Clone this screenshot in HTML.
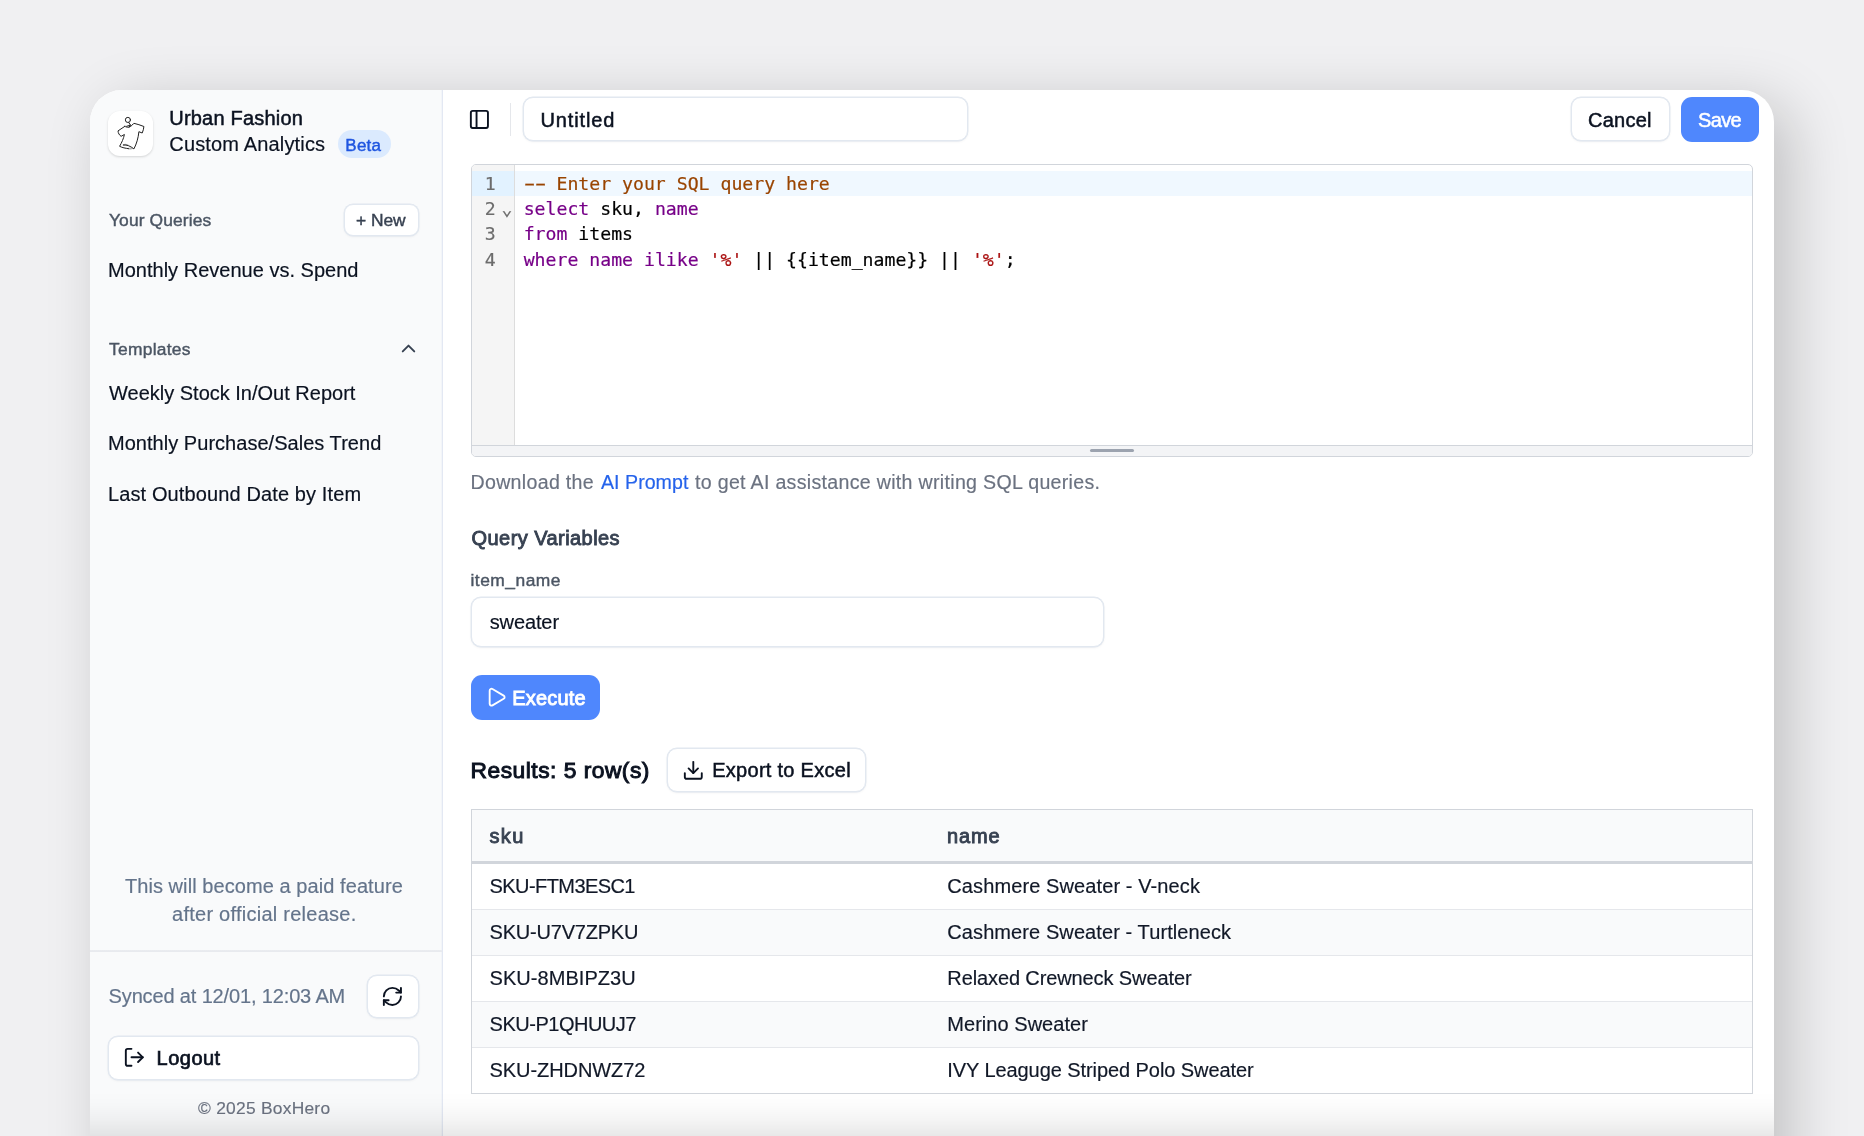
<!DOCTYPE html>
<html lang="en">
<head>
<meta charset="utf-8">
<title>Custom Analytics - Urban Fashion</title>
<style>
*{box-sizing:border-box}
html,body{margin:0;padding:0}
body{width:1864px;height:1136px;overflow:hidden;position:relative;background:#f0f0f2;font-family:"Liberation Sans", sans-serif;-webkit-font-smoothing:antialiased}
.abs{position:absolute}
.card{position:absolute;left:90px;top:90px;width:1684px;height:1200px;background:#fff;border-radius:32px 32px 0 0;box-shadow:16px 14px 60px rgba(0,0,0,.2)}
.side{position:absolute;left:0;top:0;width:353px;height:1200px;background:#f9fafb;border-right:1px solid #e3e8f3;box-shadow:inset -1px 0 0 #f2f5f9;border-radius:32px 0 0 0}
.t{position:absolute;white-space:pre;line-height:1;font-family:"Liberation Sans", sans-serif}
.ic{position:absolute;display:block;overflow:visible}
.codetxt{position:absolute;left:0;top:0;width:1280px;height:280px;will-change:transform}
.txt{position:absolute;left:0;top:0;width:1864px;height:1136px;will-change:transform}
.btn{position:absolute;background:#fff;border:1px solid #e2e8f0;border-radius:10px;box-shadow:0 0 0 .45px #e2e8f0,0 1px 2.5px rgba(15,23,42,.06)}
.logo{position:absolute;left:108px;top:111px;width:45px;height:45px;border-radius:12px;background:#fff;box-shadow:0 1px 3px rgba(0,0,0,.10),0 1px 2px rgba(0,0,0,.06)}
.badge{position:absolute;left:337.5px;top:130.3px;width:53px;height:28px;border-radius:14px;background:#dbeafe}
.hr{position:absolute;left:90px;top:950px;width:352px;height:2px;background:linear-gradient(#eaecf0,#e7e9ee)}
.vdiv{position:absolute;left:510px;top:103px;width:1.4px;height:32.5px;background:#e5e7eb}
.primary{position:absolute;background:#4f87fd;border-radius:11px}
.editor{position:absolute;left:471px;top:164.4px;width:1282px;height:292.6px;border:1.3px solid #d1d5db;border-radius:5px;overflow:hidden;background:#fff}
.gutter{position:absolute;left:0;top:0;width:43px;height:280px;background:#f5f5f5;border-right:1.3px solid #dddddd}
.gact{position:absolute;left:0;top:6px;width:42px;height:25px;background:#e2f2ff}
.lact{position:absolute;left:43px;top:6px;right:0;height:25px;background:#f0f8ff}
.cl{position:absolute;left:51.7px;white-space:pre;font-family:"DejaVu Sans Mono", "Liberation Mono", monospace;font-size:18.16px;line-height:25.3px;height:25.3px;color:#000}
.gn{position:absolute;left:0;width:23.6px;text-align:right;font-family:"DejaVu Sans Mono", "Liberation Mono", monospace;font-size:18.16px;line-height:25.3px;height:25.3px;color:#6c6c6c}
.fold{position:absolute;left:29.6px;top:32.8px;font-family:"DejaVu Sans Mono", "Liberation Mono", monospace;font-size:18.16px;color:#6c6c6c}
.dash{display:inline-block;transform:translateY(-1px) scaleX(1.8)}
.cl,.gn,.fold{-webkit-text-stroke:.2px currentColor}
.resize{position:absolute;left:0;right:0;bottom:0;height:11px;background:#f3f4f6;border-top:1.3px solid #d1d5db}
.grip{position:absolute;left:617.6px;top:3.2px;width:44.5px;height:2.8px;border-radius:2px;background:#9ca3af}
.input{position:absolute;background:#fff;border:1px solid #e2e8f0;border-radius:10px;box-shadow:0 0 0 .45px #e2e8f0,0 1px 2.5px rgba(15,23,42,.06)}
.table{position:absolute;left:471px;top:809px;width:1282px;height:285px;border:1px solid #d1d5db;background:#fff;overflow:hidden}
.th{position:absolute;left:0;top:0;right:0;height:54px;background:#f9fafb;border-bottom:3px solid #d1d5db}
.tr{position:absolute;left:0;right:0;height:46px;border-bottom:1px solid #e5e7eb}
.fade{position:absolute;left:90px;top:1092px;width:1684px;height:44px;background:linear-gradient(to bottom,rgba(0,0,0,0),rgba(0,0,0,.012) 30%,rgba(0,0,0,.04) 62%,rgba(0,0,0,.09))}
</style>
</head>
<body>
<div class="card">
  <aside class="side"></aside>
</div>
<div class="logo"></div>
<svg class="ic" style="left:108px;top:111px" width="45" height="45" viewBox="0 0 45 45" fill="none" stroke="#222" stroke-width="1.0" stroke-linecap="round" stroke-linejoin="round">
<circle cx="19.9" cy="8.9" r="2.55"/>
<path d="M20.7 11.4 22.5 14.1"/>
<path d="M16.9 15.3C18.8 16.9 22.2 16.9 24.7 13.5"/>
<path d="M18.6 15.3 22.5 14.1 21 16.2" stroke-width="1"/>
<path d="M16.9 15.3 10 19.9C10.1 22 11.400 24.300 13.100 25.300L16.400 23.500C15.600 27.600 13.700 31.600 11.600 35.300 14.400 36.700 17.400 37.300 20.400 37.600"/>
<path d="M15.400 33.900C19 33.500 22.600 35.300 25.900 37.900 28.500 33 30.300 27 30.900 20.700L34.200 22C35.100 19.900 35.700 17.700 35.900 15.500 32.600 14.200 29.300 13.100 25.900 12.300L24.700 13.500"/>
<path d="M20.400 37.600C21.700 37.700 22.800 37.600 23.800 37.400" stroke-width="1.6" opacity=".35"/>
<path d="M15.400 33.900C16.600 33.500 18.200 33.600 19.600 34" stroke-width="1.6" opacity=".3"/>
</svg>
<div class="badge"></div>
<div class="btn" style="left:344px;top:203.7px;width:75px;height:32px;border-radius:9px"></div>
<div class="hr"></div>
<div class="btn" style="left:367px;top:974.6px;width:52px;height:43px"></div>
<div class="btn" style="left:108.4px;top:1035.8px;width:310.4px;height:44.4px"></div>
<div class="vdiv"></div>
<div class="input" style="left:523px;top:97.3px;width:445.4px;height:44px"></div>
<div class="btn" style="left:1571px;top:97.2px;width:98.6px;height:43.6px"></div>
<div class="primary" style="left:1681px;top:96.9px;width:77.6px;height:44.8px"></div>
<div class="editor">
  <div class="gutter"></div>
  <div class="gact"></div>
  <div class="lact"></div>
  <div class="codetxt">
  <div class="gn" style="top:5.50px">1</div><div class="gn" style="top:30.80px">2</div><div class="gn" style="top:56.30px">3</div><div class="gn" style="top:82.40px">4</div>
  <div class="fold">&#8964;</div>
  <div class="cl" style="top:5.50px"><span style="color:#994400"><span class="dash">-</span><span class="dash">-</span> Enter your SQL query here</span></div><div class="cl" style="top:30.80px"><span style="color:#770088">select</span> sku, <span style="color:#770088">name</span></div><div class="cl" style="top:56.30px"><span style="color:#770088">from</span> items</div><div class="cl" style="top:82.40px"><span style="color:#770088">where</span> <span style="color:#770088">name</span> <span style="color:#770088">ilike</span> <span style="color:#aa1111">&#x27;%&#x27;</span> || {{item_name}} || <span style="color:#aa1111">&#x27;%&#x27;</span>;</div>
  </div>
  <div class="resize"><div class="grip"></div></div>
</div>
<div class="input" style="left:471px;top:597.4px;width:632.6px;height:49.6px"></div>
<div class="primary" style="left:471px;top:675px;width:129px;height:44.7px"></div>
<div class="btn" style="left:666.5px;top:748px;width:199.5px;height:44px"></div>
<div class="table">
  <div class="th"></div>
  <div class="tr" style="top:54px;background:#ffffff"></div><div class="tr" style="top:100px;background:#f9fafb"></div><div class="tr" style="top:146px;background:#ffffff"></div><div class="tr" style="top:192px;background:#f9fafb"></div><div class="tr" style="top:238px;background:#ffffff"></div>
</div>
<svg class="ic" style="left:467.90px;top:108.00px" width="22.8" height="22.8" viewBox="0 0 24 24" fill="none" stroke="#0b1220" stroke-width="2" stroke-linecap="round" stroke-linejoin="round"><rect width="18" height="18" x="3" y="3" rx="2"/><path d="M9 3v18"/></svg><svg class="ic" style="left:396.80px;top:337.00px" width="23" height="23" viewBox="0 0 24 24" fill="none" stroke="#374151" stroke-width="2" stroke-linecap="round" stroke-linejoin="round"><path d="m18 15-6-6-6 6"/></svg><svg class="ic" style="left:485.20px;top:685.70px" width="22.4" height="22.4" viewBox="0 0 24 24" fill="none" stroke="#ffffff" stroke-width="2" stroke-linecap="round" stroke-linejoin="round"><path d="M5 5a2 2 0 0 1 3.008-1.728l11.997 6.998a2 2 0 0 1 .003 3.458l-12 7A2 2 0 0 1 5 19z"/></svg><svg class="ic" style="left:681.80px;top:758.50px" width="22.6" height="22.6" viewBox="0 0 24 24" fill="none" stroke="#0b1220" stroke-width="2" stroke-linecap="round" stroke-linejoin="round"><path d="M21 15v4a2 2 0 0 1-2 2H5a2 2 0 0 1-2-2v-4"/><path d="m7 10 5 5 5-5"/><path d="M12 15V3"/></svg><svg class="ic" style="left:381.40px;top:985.10px" width="22.8" height="22.8" viewBox="0 0 24 24" fill="none" stroke="#0b1220" stroke-width="2" stroke-linecap="round" stroke-linejoin="round"><path d="M3 12a9 9 0 0 1 9-9 9.75 9.75 0 0 1 6.74 2.74L21 8"/><path d="M21 3v5h-5"/><path d="M21 12a9 9 0 0 1-9 9 9.75 9.75 0 0 1-6.74-2.74L3 16"/><path d="M8 16H3v5"/></svg><svg class="ic" style="left:123.00px;top:1046.40px" width="22.6" height="22.6" viewBox="0 0 24 24" fill="none" stroke="#0b1220" stroke-width="2" stroke-linecap="round" stroke-linejoin="round"><path d="M9 21H5a2 2 0 0 1-2-2V5a2 2 0 0 1 2-2h4"/><path d="m16 17 5-5-5-5"/><path d="M21 12H9"/></svg>
<div class="txt"><span class="t" style="left:169.30px;top:107.97px;font-size:20px;font-weight:400;color:#0b1220;letter-spacing:0.195px;-webkit-text-stroke:0.5px currentColor;">Urban Fashion</span><span class="t" style="left:169.30px;top:134.37px;font-size:20px;font-weight:400;color:#0b1220;letter-spacing:0.161px;-webkit-text-stroke:0.18px currentColor;">Custom Analytics</span><span class="t" style="left:345.30px;top:136.81px;font-size:17px;font-weight:400;color:#1f55e0;letter-spacing:0.261px;-webkit-text-stroke:0.43px currentColor;">Beta</span><span class="t" style="left:109.00px;top:211.77px;font-size:17.4px;font-weight:400;color:#4b5563;letter-spacing:0.121px;-webkit-text-stroke:0.43px currentColor;">Your Queries</span><span class="t" style="left:356.00px;top:211.77px;font-size:17.4px;font-weight:400;color:#374151;letter-spacing:-0.055px;-webkit-text-stroke:0.43px currentColor;">+ New</span><span class="t" style="left:108.00px;top:260.27px;font-size:20px;font-weight:400;color:#0b1220;letter-spacing:0.012px;-webkit-text-stroke:0.18px currentColor;">Monthly Revenue vs. Spend</span><span class="t" style="left:109.00px;top:340.77px;font-size:17.4px;font-weight:400;color:#4b5563;letter-spacing:0.280px;-webkit-text-stroke:0.43px currentColor;">Templates</span><span class="t" style="left:109.00px;top:382.77px;font-size:20px;font-weight:400;color:#0b1220;letter-spacing:-0.002px;-webkit-text-stroke:0.18px currentColor;">Weekly Stock In/Out Report</span><span class="t" style="left:108.00px;top:433.27px;font-size:20px;font-weight:400;color:#0b1220;letter-spacing:0.033px;-webkit-text-stroke:0.18px currentColor;">Monthly Purchase/Sales Trend</span><span class="t" style="left:108.00px;top:483.57px;font-size:20px;font-weight:400;color:#0b1220;letter-spacing:0.117px;-webkit-text-stroke:0.18px currentColor;">Last Outbound Date by Item</span><span class="t" style="left:124.90px;top:875.97px;font-size:20px;font-weight:400;color:#64748b;letter-spacing:0.074px;-webkit-text-stroke:0.18px currentColor;">This will become a paid feature</span><span class="t" style="left:172.00px;top:903.87px;font-size:20px;font-weight:400;color:#64748b;letter-spacing:0.257px;-webkit-text-stroke:0.18px currentColor;">after official release.</span><span class="t" style="left:108.60px;top:986.27px;font-size:20px;font-weight:400;color:#64748b;letter-spacing:-0.146px;-webkit-text-stroke:0.18px currentColor;">Synced at 12/01, 12:03 AM</span><span class="t" style="left:156.60px;top:1047.77px;font-size:20px;font-weight:400;color:#0b1220;letter-spacing:0.477px;-webkit-text-stroke:0.7px currentColor;">Logout</span><span class="t" style="left:198.00px;top:1099.87px;font-size:17.4px;font-weight:400;color:#6b7280;letter-spacing:0.250px;-webkit-text-stroke:0.16px currentColor;">© 2025 BoxHero</span><span class="t" style="left:540.40px;top:110.07px;font-size:20px;font-weight:400;color:#0b1220;letter-spacing:0.887px;-webkit-text-stroke:0.5px currentColor;">Untitled</span><span class="t" style="left:1588.00px;top:109.97px;font-size:20px;font-weight:400;color:#0b1220;letter-spacing:0.237px;-webkit-text-stroke:0.5px currentColor;">Cancel</span><span class="t" style="left:1698.00px;top:109.97px;font-size:20px;font-weight:400;color:#ffffff;letter-spacing:-0.654px;-webkit-text-stroke:0.5px currentColor;">Save</span><span class="t" style="left:471.50px;top:528.47px;font-size:20px;font-weight:400;color:#374151;letter-spacing:0.442px;-webkit-text-stroke:0.88px currentColor;">Query Variables</span><span class="t" style="left:470.50px;top:571.67px;font-size:17.4px;font-weight:400;color:#4b5563;letter-spacing:0.493px;-webkit-text-stroke:0.43px currentColor;">item_name</span><span class="t" style="left:489.70px;top:612.27px;font-size:20px;font-weight:400;color:#0b1220;letter-spacing:-0.112px;-webkit-text-stroke:0.18px currentColor;">sweater</span><span class="t" style="left:512.30px;top:687.77px;font-size:20px;font-weight:400;color:#ffffff;letter-spacing:0.193px;-webkit-text-stroke:0.88px currentColor;">Execute</span><span class="t" style="left:470.60px;top:759.40px;font-size:22.8px;font-weight:400;color:#0b1220;letter-spacing:0.486px;-webkit-text-stroke:1.0px currentColor;">Results: 5 row(s)</span><span class="t" style="left:712.20px;top:760.07px;font-size:20px;font-weight:400;color:#0b1220;letter-spacing:0.282px;-webkit-text-stroke:0.5px currentColor;">Export to Excel</span><span class="t" style="left:489.40px;top:825.97px;font-size:20px;font-weight:400;color:#374151;letter-spacing:1.400px;-webkit-text-stroke:0.88px currentColor;">sku</span><span class="t" style="left:947.00px;top:825.97px;font-size:20px;font-weight:400;color:#374151;letter-spacing:0.898px;-webkit-text-stroke:0.88px currentColor;">name</span><span class="t" style="left:489.60px;top:876.17px;font-size:20px;font-weight:400;color:#111827;letter-spacing:-0.584px;-webkit-text-stroke:0.18px currentColor;">SKU-FTM3ESC1</span><span class="t" style="left:947.30px;top:876.17px;font-size:20px;font-weight:400;color:#111827;letter-spacing:0.104px;-webkit-text-stroke:0.18px currentColor;">Cashmere Sweater - V-neck</span><span class="t" style="left:489.60px;top:922.17px;font-size:20px;font-weight:400;color:#111827;letter-spacing:-0.210px;-webkit-text-stroke:0.18px currentColor;">SKU-U7V7ZPKU</span><span class="t" style="left:947.30px;top:922.17px;font-size:20px;font-weight:400;color:#111827;letter-spacing:0.090px;-webkit-text-stroke:0.18px currentColor;">Cashmere Sweater - Turtleneck</span><span class="t" style="left:489.60px;top:968.17px;font-size:20px;font-weight:400;color:#111827;letter-spacing:0.042px;-webkit-text-stroke:0.18px currentColor;">SKU-8MBIPZ3U</span><span class="t" style="left:947.30px;top:968.17px;font-size:20px;font-weight:400;color:#111827;letter-spacing:-0.109px;-webkit-text-stroke:0.18px currentColor;">Relaxed Crewneck Sweater</span><span class="t" style="left:489.60px;top:1014.17px;font-size:20px;font-weight:400;color:#111827;letter-spacing:-0.494px;-webkit-text-stroke:0.18px currentColor;">SKU-P1QHUUJ7</span><span class="t" style="left:947.30px;top:1014.17px;font-size:20px;font-weight:400;color:#111827;letter-spacing:0.039px;-webkit-text-stroke:0.18px currentColor;">Merino Sweater</span><span class="t" style="left:489.60px;top:1060.17px;font-size:20px;font-weight:400;color:#111827;letter-spacing:-0.086px;-webkit-text-stroke:0.18px currentColor;">SKU-ZHDNWZ72</span><span class="t" style="left:947.30px;top:1060.17px;font-size:20px;font-weight:400;color:#111827;letter-spacing:-0.075px;-webkit-text-stroke:0.18px currentColor;">IVY Leaguge Striped Polo Sweater</span><span class="t" style="left:470.50px;top:473.01px;font-size:19.6px;color:#6b7280;letter-spacing:0.307px;-webkit-text-stroke:.18px currentColor">Download the</span><span class="t" style="left:601.00px;top:473.01px;font-size:19.6px;color:#2563eb;letter-spacing:0.029px;-webkit-text-stroke:.18px currentColor">AI Prompt</span><span class="t" style="left:695.00px;top:473.01px;font-size:19.6px;color:#6b7280;letter-spacing:0.304px;-webkit-text-stroke:.18px currentColor">to get AI assistance with writing SQL queries.</span></div>
<div class="fade"></div>
</body>
</html>
